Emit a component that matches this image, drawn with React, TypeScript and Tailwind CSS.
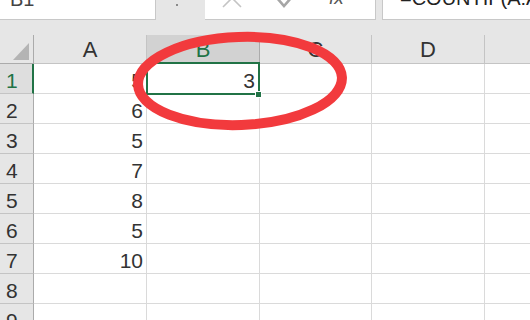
import React from "react";

const letters = ["A", "B", "C", "D", "E"];
const aVals = ["5", "6", "5", "7", "8", "5", "10", "", ""];

export default function App() {
  return (
    <div
      className="relative w-[530px] h-[320px] overflow-hidden bg-[#e6e6e6] text-[#333]"
      style={{ fontFamily: '"Liberation Sans", "Noto Sans CJK SC", sans-serif' }}
    >
      {/* formula bar */}
      <div className="flex h-[20px]">
        <div className="w-[156px] h-full bg-white border-r border-b border-[#c8c8c8] overflow-hidden">
          <div className="pl-[10px] -mt-[11px] text-[20px] leading-none text-[#444]">B1</div>
        </div>
        <div className="w-[49px] h-full relative">
          <div className="absolute left-[20px] top-[4px] w-[2px] h-[2px] bg-[#8a8a8a]" />
        </div>
        <div className="w-[171px] h-full bg-white border-r border-b border-[#c8c8c8] relative overflow-hidden">
          <svg className="absolute left-0 top-0" width="171" height="20">
            <path d="M18 7 L27 -2 M27 -2 L36 7" stroke="#c4c4c4" strokeWidth="1.6" fill="none" />
            <path d="M72 -2 L79 6 L86 -2" stroke="#a6a6a6" strokeWidth="2.6" fill="none" />
          </svg>
          <div className="absolute left-[124px] -top-[12px] text-[19px] italic leading-none text-[#555]">fx</div>
        </div>
        <div className="w-[6px] h-full" />
        <div className="flex-1 h-full bg-white border-l border-b border-[#c8c8c8] overflow-hidden">
          <div className="pl-[17px] -mt-[12px] text-[20px] leading-none text-[#222] whitespace-nowrap">=COUNTIF(A:A,B1)</div>
        </div>
      </div>
      <div className="h-[15px]" />

      {/* grid */}
      <div className="grid w-[598px] grid-cols-[34px_113px_113px_112px_113px_113px] bg-white">
        {/* header row */}
        <div className="h-[29px] bg-[#e6e6e6] border-r border-b border-[#ababab] relative">
          <svg className="absolute left-0 top-0" width="34" height="28">
            <polygon points="13,25 29,25 29,8" fill="#b4b4b4" />
          </svg>
        </div>
        {letters.map((l, i) => (
          <div
            key={l}
            className={
              "h-[29px] border-b border-r flex items-end justify-center text-[22px] leading-none pb-[2px] " +
              (i === 1
                ? "bg-[#d2d2d2] border-[#ababab] text-[#217346]"
                : "bg-[#e6e6e6] border-[#c4c4c4] text-[#333]")
            }
          >
            {l}
          </div>
        ))}
        {aVals.map((v, r) => (
          <React.Fragment key={r}>
            <div
              className={
                "h-[30px] border-b border-[#c4c4c4] flex items-end pl-[6px] pb-[2px] text-[21px] leading-none " +
                (r === 0
                  ? "bg-[#dedede] text-[#217346] border-r-2 border-r-[#217346]"
                  : "bg-[#e6e6e6] text-[#333] border-r border-r-[#ababab]")
              }
            >
              {r + 1}
            </div>
            <div className="h-[30px] border-r border-b border-[#dadada] flex items-end justify-end pr-[3px] pb-[2px] text-[21px] leading-none text-[#333]">
              {v}
            </div>
            <div className="h-[30px] border-r border-b border-[#dadada] flex items-end justify-end pr-[4px] pb-[2px] text-[21px] leading-none text-[#333]">
              {r === 0 ? "3" : ""}
            </div>
            <div className="h-[30px] border-r border-b border-[#dadada]" />
            <div className="h-[30px] border-r border-b border-[#dadada]" />
            <div className="h-[30px] border-b border-[#dadada]" />
          </React.Fragment>
        ))}
      </div>

      {/* selection */}
      <div className="absolute left-[146px] top-[62px] w-[114px] h-[33px] border-2 border-[#217346]" />
      <div className="absolute left-[255px] top-[91px] w-[7px] h-[7px] bg-[#217346] border border-white" />

      {/* red ellipse annotation */}
      <svg className="absolute left-0 top-0 pointer-events-none" width="530" height="320">
        <ellipse cx="240" cy="81" rx="102" ry="44" fill="none" stroke="#f23a3d" strokeWidth="10" transform="rotate(-2 240 81)" />
      </svg>
    </div>
  );
}
